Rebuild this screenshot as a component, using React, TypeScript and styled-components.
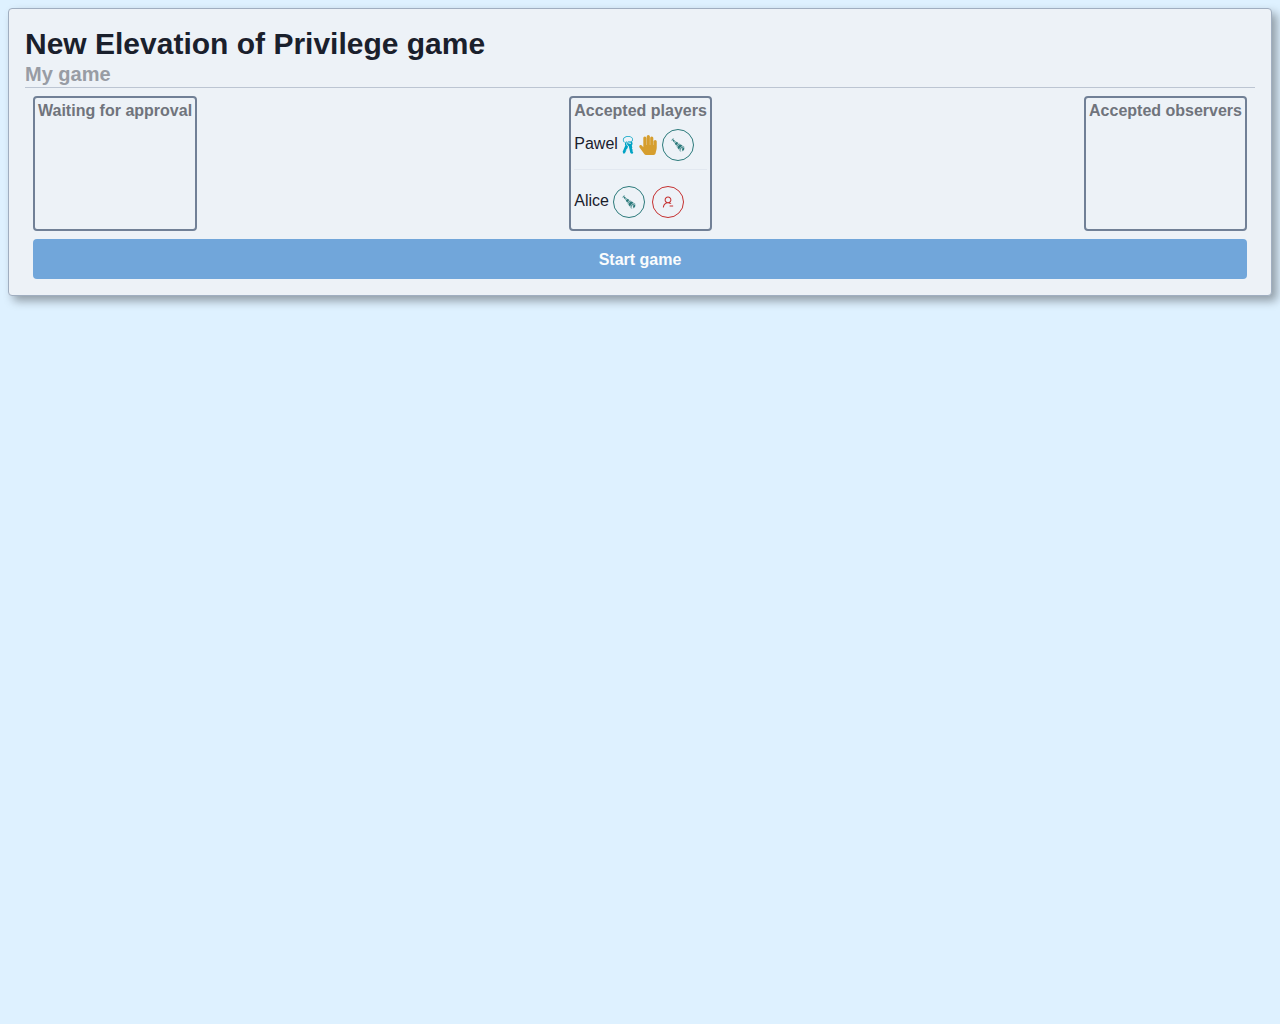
import React from "react";
import styled, { createGlobalStyle } from "styled-components";
import { GiHouseKeys, GiSpyglass } from "react-icons/gi";
import { FaHandPaper } from "react-icons/fa";
import { AiOutlineUserDelete } from "react-icons/ai";

const GlobalStyle = createGlobalStyle`
  *, *::before, *::after { box-sizing: border-box; }
  body {
    display: flow-root;
    min-height: 100vh;
    margin: 0;
    background: #def1ff;
    color: #1a202c;
    font-family: "Liberation Sans", Arial, Helvetica, sans-serif;
    font-size: 16px;
    line-height: 24px;
  }
`;

const Card = styled.main`
  margin: 8px;
  padding: 16px;
  background: #edf2f7;
  border: 1px solid #a0aec0;
  border-radius: 4px;
  box-shadow: 5px 5px 10px rgba(0, 0, 0, 0.35);
`;

const Header = styled.header`
  padding-bottom: 2px;
  border-bottom: 1px solid #bcc5d2;
`;

const Title = styled.h1`
  margin: 0;
  font-size: 30px;
  line-height: 38px;
  font-weight: 700;
`;

const Subtitle = styled.h2`
  margin: 0;
  font-size: 20px;
  line-height: 22px;
  font-weight: 700;
  color: #989ca4;
`;

const Content = styled.div`
  display: flex;
  flex-direction: column;
  gap: 8px;
  padding: 8px 8px 0;
`;

const Columns = styled.div`
  display: flex;
  justify-content: space-between;
`;

const Panel = styled.section`
  padding: 3px;
  border: 2px solid #718096;
  border-radius: 4px;
`;

const PanelTitle = styled.h3`
  margin: 0;
  font-size: 16px;
  line-height: 20px;
  font-weight: 700;
  color: #70747c;
`;

const PlayerList = styled.ul`
  margin: 0;
  padding: 0;
  list-style: none;
`;

const Player = styled.li`
  display: flex;
  align-items: center;
  padding: 8px 0;

  & + & {
    padding-top: 16px;
    border-top: 1px solid #e2e8f0;
  }
`;

const PlayerName = styled.span`
  padding-bottom: 2px;
`;

const Badges = styled.span`
  display: flex;
`;

const Actions = styled.span`
  display: flex;
  gap: 7px;
  margin-left: 4px;
`;

const IconButton = styled.button<{ $color: string }>`
  display: flex;
  align-items: center;
  justify-content: center;
  width: 32px;
  height: 32px;
  padding: 0;
  background: transparent;
  border: 1px solid ${(p) => p.$color};
  border-radius: 50%;
  color: ${(p) => p.$color};
  font-size: 14px;
  cursor: pointer;
`;

const StartButton = styled.button`
  height: 40px;
  border: 0;
  border-radius: 4px;
  background: #71a6da;
  color: #fafcfd;
  font: inherit;
  font-weight: 700;
  line-height: 19px;
`;

type PlayerInfo = { name: string; host?: boolean };

const players: PlayerInfo[] = [{ name: "Pawel", host: true }, { name: "Alice" }];

export default function App() {
  return (
    <>
      <GlobalStyle />
      <Card>
        <Header>
          <Title>New Elevation of Privilege game</Title>
          <Subtitle>My game</Subtitle>
        </Header>
        <Content>
          <Columns>
            <Panel>
              <PanelTitle>Waiting for approval</PanelTitle>
            </Panel>
            <Panel>
              <PanelTitle>Accepted players</PanelTitle>
              <PlayerList>
                {players.map(({ name, host }) => (
                  <Player key={name}>
                    <PlayerName>{name}</PlayerName>
                    {host && (
                      <Badges>
                        <GiHouseKeys size={20} color="#00a3c4" />
                        <FaHandPaper size={20} color="#d69e2e" />
                      </Badges>
                    )}
                    <Actions>
                      <IconButton $color="#2c7a7b" aria-label={`Make ${name} an observer`}>
                        <GiSpyglass />
                      </IconButton>
                      {!host && (
                        <IconButton $color="#c53030" aria-label={`Remove ${name}`}>
                          <AiOutlineUserDelete />
                        </IconButton>
                      )}
                    </Actions>
                  </Player>
                ))}
              </PlayerList>
            </Panel>
            <Panel>
              <PanelTitle>Accepted observers</PanelTitle>
            </Panel>
          </Columns>
          <StartButton>Start game</StartButton>
        </Content>
      </Card>
    </>
  );
}
